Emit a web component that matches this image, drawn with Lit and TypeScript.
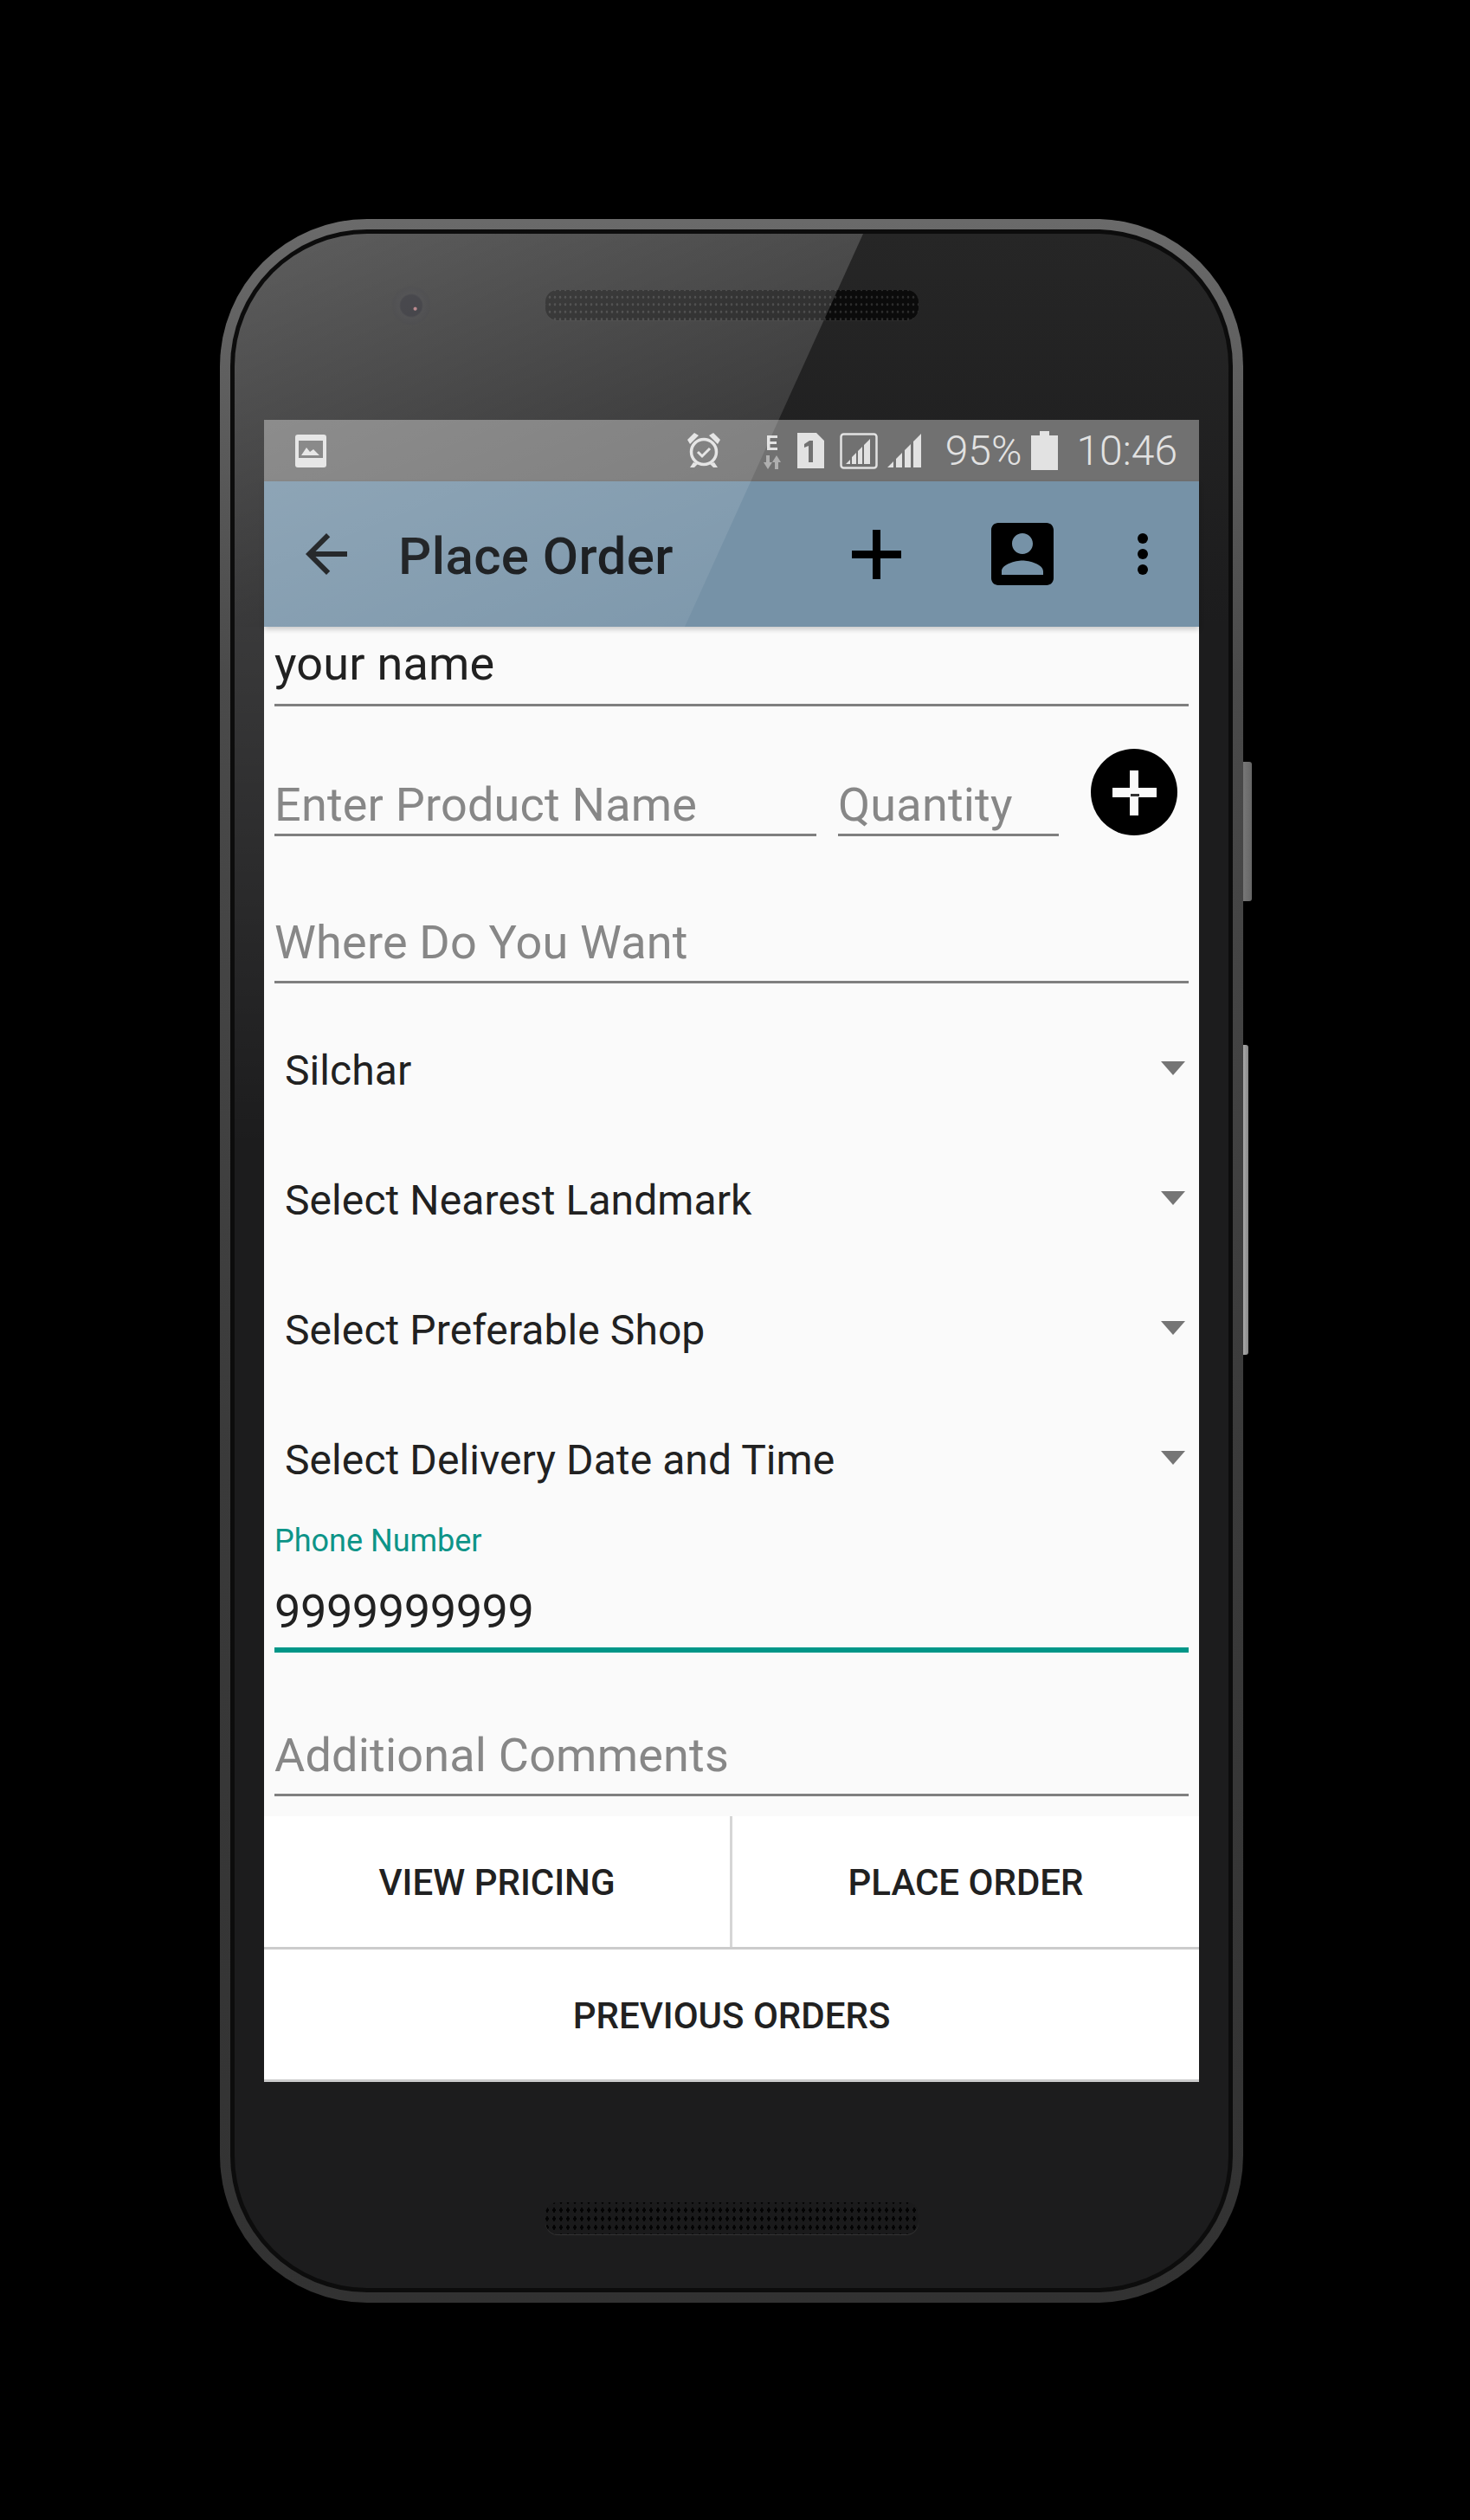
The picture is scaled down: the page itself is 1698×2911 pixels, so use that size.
import { LitElement, html, css } from "lit";
import { customElement } from "lit/decorators.js";

const chevron = html`<svg class="tri" viewBox="0 0 28 16"><path d="M0 0h28L14 16z" /></svg>`;

@customElement("app-root")
export class AppRoot extends LitElement {
  static styles = css`
    :host { display: block; min-height: 2911px; background: #000; font-family: Roboto, "Liberation Sans", sans-serif; overflow: hidden; }
    .stage { padding: 253px 0 0 254px; height: 2911px; box-sizing: border-box; }
    .phone { position: relative; width: 1182px; height: 2407px; box-sizing: border-box; padding: 12px; border-radius: 170px; background: linear-gradient(180deg, #6a6a6a 0, #4a4a4a 22%, #3a3a3a 60%, #323232 100%); }
    .btn { position: absolute; background: linear-gradient(90deg, #777, #666); border-radius: 0 3px 3px 0; }
    .btn.power { left: 1182px; top: 627px; width: 10px; height: 161px; }
    .btn.vol { left: 1182px; top: 954px; width: 6px; height: 358px; background: linear-gradient(90deg, #aaa, #888); }
    .rim { height: 100%; box-sizing: border-box; padding: 5px; border-radius: 158px; background: #0c0c0c; }
    .face { position: relative; height: 100%; box-sizing: border-box; padding: 0 34px; border-radius: 153px; overflow: hidden; display: flex; flex-direction: column; background: linear-gradient(180deg, #262626 0, #1c1c1d 450px); }
    .bezel-top { height: 215px; flex: none; display: flex; justify-content: center; padding-top: 65px; box-sizing: border-box; }
    .speaker { width: 431px; height: 35px; border-radius: 14px; background-color: #0b0b0b; background-image: radial-gradient(circle, #2c2c2c 1.1px, transparent 1.7px); background-size: 6px 8.500px; background-position: 8px 4px; box-shadow: 0 1px 0 #2a2a2a; }
    .camera { position: absolute; left: 181px; top: 60px; width: 46px; height: 46px; border-radius: 50%; background: radial-gradient(circle at 60% 58%, #a86a70 0 1.500px, transparent 2.500px), radial-gradient(circle, #17171d 0 12px, #262628 14px, #222224 21px, transparent 23px); }
    .sheen { position: absolute; z-index: 2; left: 0; top: 0; width: 800px; height: 460px; pointer-events: none; clip-path: polygon(0 0, 726px 0, 520px 454px, 0 454px); background: linear-gradient(158deg, rgba(255,255,255,.26), rgba(255,255,255,.03)); }
    .sheen-strip { position: absolute; left: 0; top: 454px; width: 34px; height: 600px; pointer-events: none; background: linear-gradient(180deg, rgba(255,255,255,.13), rgba(255,255,255,0)); }
    .screen { flex: none; height: 1920px; width: 1080px; display: flex; flex-direction: column; background: #fafafa; }
    .status { flex: none; height: 71px; display: flex; align-items: center; padding: 0 25px 0 36px; color: #e2e2e2; background: #717171; }
    .status svg { display: block; fill: #e2e2e2; flex: none; }
    .status .num { font-size: 48px; font-weight: 300; line-height: 71px; white-space: nowrap; }
    .grow { flex: 1; }
    .appbar { flex: none; height: 168px; display: flex; align-items: center; background: #7692a7; color: #04070a; position: relative; z-index: 1; box-shadow: 0 3px 6px rgba(0,0,0,.2); }
    .appbar svg { display: block; flex: none; }
    .title { font-size: 60px; font-weight: 500; letter-spacing: .4px; margin: 4px 0 0 59px; white-space: nowrap; }
    .form { flex: 1; padding: 0 12px; display: flex; flex-direction: column; min-height: 0; }
    .field { border-bottom: 3px solid #7f7f7f; font-size: 54px; line-height: 64px; letter-spacing: .2px; color: #212121; padding-bottom: 12px; white-space: nowrap; }
    .hint { color: #878787; }
    .name { margin-top: 11px; padding-bottom: 14px; }
    .products { display: flex; align-items: flex-start; margin-top: 82px; position: relative; }
    .products .field { padding-bottom: 1px; }
    .product { width: 626px; }
    .qty { width: 255px; margin-left: 25px; }
    .fab { position: absolute; left: 943px; top: -33px; width: 100px; height: 100px; border-radius: 50%; background: #000; display: block; }
    .where { margin-top: 91px; }
    .spins { margin-top: 25px; display: flex; flex-direction: column; }
    .spin { height: 150px; display: flex; align-items: center; justify-content: space-between; padding: 0 4px 0 12px; font-size: 48px; letter-spacing: .08px; color: #212121; }
    .tri { width: 28px; height: 16px; fill: #757575; display: block; margin-bottom: 4px; }
    .phone-field { margin-top: -2px; }
    .label { font-size: 36px; line-height: 42px; color: #0d9488; }
    .value { border-bottom: 6px solid #009688; margin-top: 29px; padding-bottom: 9px; letter-spacing: -.4px; }
    .comments { margin-top: 87px; }
    .actions { flex: none; background: #fff; }
    .row { display: flex; height: 154px; box-sizing: border-box; border-bottom: 3px solid #ccc; }
    .row.last { height: 153px; }
    .act { flex: 1; display: flex; align-items: center; justify-content: center; padding-top: 2px; font-size: 42px; font-weight: 500; color: #212121; }
    .act.left { flex: none; width: 538px; border-right: 3px solid #d6d6d6; }
    .bezel-bottom { flex: 1; display: flex; justify-content: center; padding-top: 139px; box-sizing: border-box; }
    .speaker.low { height: 37px; background-color: #1a1a1b; background-image: radial-gradient(ellipse 1.800px 3px, #030303 85%, transparent 100%); background-size: 8px 10px; background-position: 6px 4px; box-shadow: 0 1px 0 #333; }
  `;

  render() {
    return html`
      <div class="stage">
        <div class="phone">
          <div class="btn power"></div>
          <div class="btn vol"></div>
          <div class="rim">
            <div class="face">
              <div class="bezel-top">
                <div class="speaker"></div>
              </div>
              <div class="camera"></div>
              <div class="screen">
                <div class="status">
                  <svg width="36" height="38" viewBox="0 0 36 38"><path fill-rule="evenodd" d="M3 0h30a3 3 0 0 1 3 3v32a3 3 0 0 1-3 3H3a3 3 0 0 1-3-3V3a3 3 0 0 1 3-3zM4 7v20h28V7zM7 24l6-9 4 5 4-3 7 7z" /></svg>
                  <div class="grow"></div>
                  <svg width="40" height="43" viewBox="0 0 40 43">
                    <path d="M1 9 9 1l5 3L4 14zM39 9l-8-8-5 3 10 10z" />
                    <circle cx="20" cy="23" r="14.500" fill="none" stroke="#e2e2e2" stroke-width="3.500" />
                    <path d="M13 23l5 5 9-9" fill="none" stroke="#e2e2e2" stroke-width="3" />
                    <path d="M8 35l-4 6h5l4-4zM32 35l4 6h-5l-4-4z" />
                  </svg>
                  <svg style="margin-left:48px" width="22" height="42" viewBox="0 0 22 42">
                    <path d="M5 3h12v3H8.500v4H16v3H8.500v4H17v3H5z" />
                    <path opacity=".55" d="M4 26h4v8h3l-5 8-5-8h3zM14 42h4v-8h3l-5-8-5 8h3z" />
                  </svg>
                  <svg style="margin-left:18px" width="31" height="41" viewBox="0 0 31 41">
                    <path fill-rule="evenodd" d="M0 0h22l9 9v32H0zM14 9l-6 4v4l5-2v19h5V9z" />
                  </svg>
                  <svg style="margin-left:18px" width="44" height="42" viewBox="0 0 44 42">
                    <rect x="1.500" y="1.500" width="41" height="39" rx="3" fill="none" stroke="#e2e2e2" stroke-width="2.500" />
                    <path d="M7 36l5-5v5zM14 36v-8l5-5v13zM21 36V21l5-5v20zM28 36V14l7-7v29z" />
                  </svg>
                  <svg style="margin-left:11px" width="39" height="39" viewBox="0 0 39 39">
                    <path d="M0 39l7-7v7zM10 39V29l7-7v17zM20 39V19l7-7v27zM30 39V9l9-9v39z" />
                  </svg>
                  <span class="num" style="margin-left:28px">95%</span>
                  <svg style="margin-left:11px" width="31" height="45" viewBox="0 0 31 45">
                    <path d="M10 0h11v5h10v40H0V5h10z" />
                  </svg>
                  <span class="num" style="margin-left:21px">10:46</span>
                </div>
                <div class="appbar">
                  <svg style="margin-left:48px" width="48" height="48" viewBox="4 4 16 16" fill="#04070a"><path d="M20 11H7.830l5.590-5.590L12 4l-8 8 8 8 1.410-1.410L7.830 13H20v-2z" /></svg>
                  <div class="title">Place Order</div>
                  <div class="grow"></div>
                  <svg width="57" height="57" viewBox="0 0 57 57"><path d="M24 0h9v24h24v9H33v24h-9V33H0v-9h24z" /></svg>
                  <svg style="margin-left:104px" width="72" height="72" viewBox="3 3 18 18"><path d="M3 5v14c0 1.100.89 2 2 2h14c1.100 0 2-.9 2-2V5c0-1.100-.9-2-2-2H5c-1.110 0-2 .9-2 2zm12 4c0 1.660-1.340 3-3 3s-3-1.340-3-3 1.340-3 3-3 3 1.340 3 3zm-9 8c0-2 4-3.100 6-3.100s6 1.100 6 3.100v1H6v-1z" /></svg>
                  <svg style="margin-left:97px;margin-right:59px" width="12" height="48" viewBox="0 0 12 48"><circle cx="6" cy="6" r="6" /><circle cx="6" cy="24" r="6" /><circle cx="6" cy="42" r="6" /></svg>
                </div>
                <div class="form">
                  <div class="field name">your name</div>
                  <div class="products">
                    <div class="field hint product">Enter Product Name</div>
                    <div class="field hint qty">Quantity</div>
                    <svg class="fab" viewBox="0 0 100 100">
                      <path fill="#fafafa" d="M45 25h10v20h21v11H55v21H45V56H25V45h20z" />
                      <rect x="46" y="52" width="10" height="3" fill="#333" />
                    </svg>
                  </div>
                  <div class="field hint where">Where Do You Want</div>
                  <div class="spins">
                    ${["Silchar", "Select Nearest Landmark", "Select Preferable Shop", "Select Delivery Date and Time"].map(
                      (t) => html`<div class="spin"><span>${t}</span>${chevron}</div>`
                    )}
                  </div>
                  <div class="phone-field">
                    <div class="label">Phone Number</div>
                    <div class="field value">9999999999</div>
                  </div>
                  <div class="field hint comments">Additional Comments</div>
                </div>
                <div class="actions">
                  <div class="row">
                    <div class="act left">VIEW PRICING</div>
                    <div class="act">PLACE ORDER</div>
                  </div>
                  <div class="row last">
                    <div class="act">PREVIOUS ORDERS</div>
                  </div>
                </div>
              </div>
              <div class="bezel-bottom">
                <div class="speaker low"></div>
              </div>
              <div class="sheen"></div>
              <div class="sheen-strip"></div>
            </div>
          </div>
        </div>
      </div>
    `;
  }
}
